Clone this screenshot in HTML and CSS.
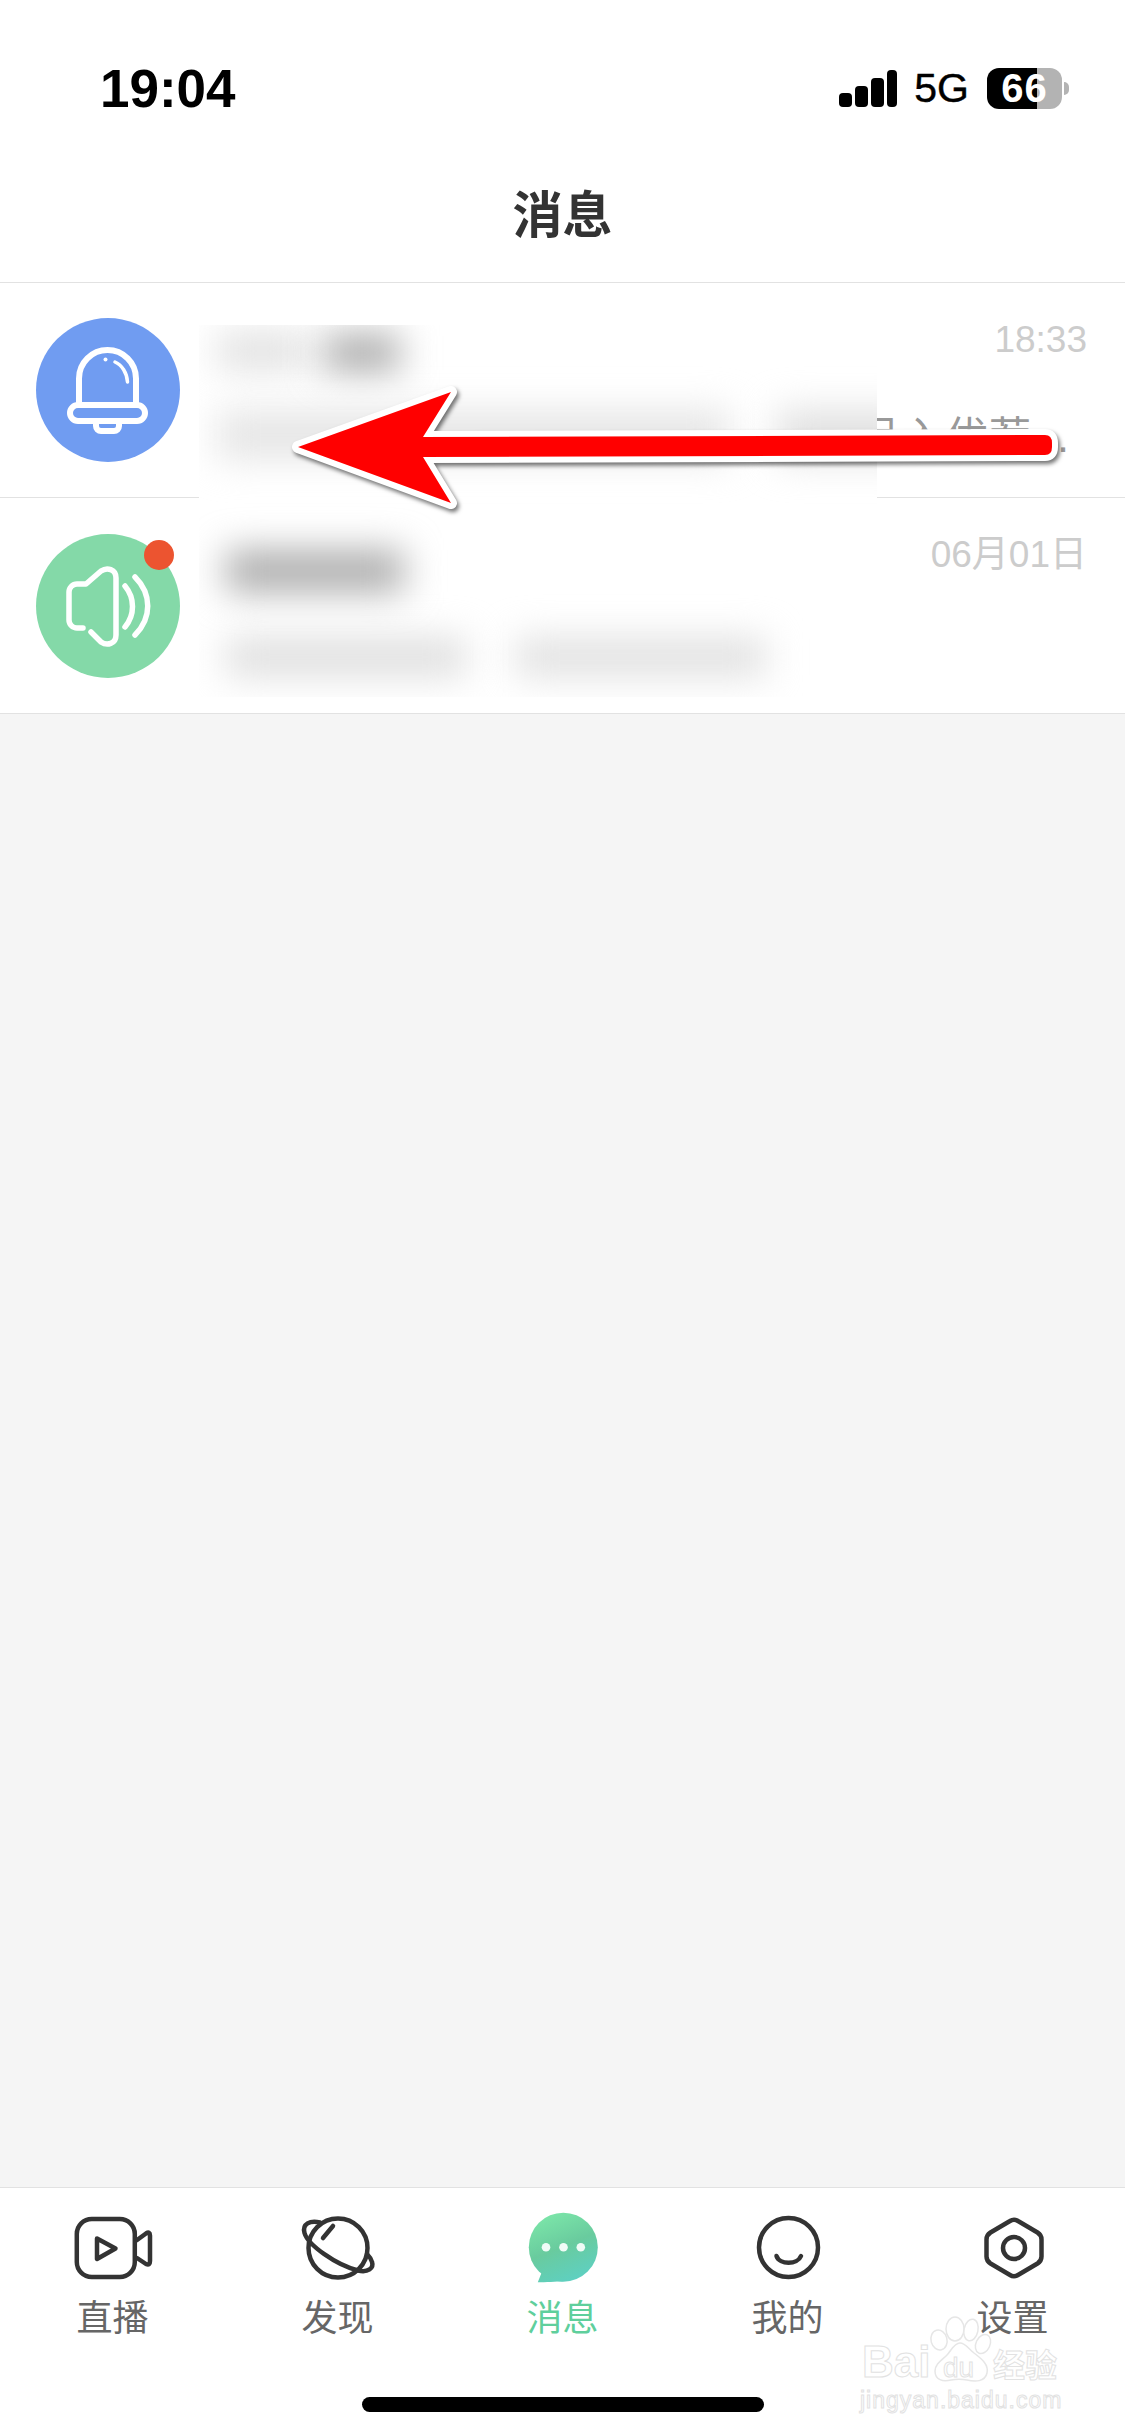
FILE: index.html
```html
<!DOCTYPE html>
<html lang="zh-CN">
<head>
  <meta charset="UTF-8">
  <meta name="viewport" content="width=device-width, initial-scale=1.0">
  <title>消息</title>
  <link rel="stylesheet" href="styles.css">
</head>
<body>
<div class="phone">

  <div class="status-bar">
    <span class="clock">19:04</span>
    <div class="status-right">
      <svg class="signal" width="58" height="37" viewBox="0 0 58 37">
        <rect x="0" y="23" width="13" height="14" rx="4"/>
        <rect x="16" y="16" width="13" height="21" rx="4"/>
        <rect x="32" y="8" width="13" height="29" rx="4"/>
        <rect x="48" y="0" width="10" height="37" rx="4"/>
      </svg>
      <span class="net">5G</span>
      <div class="battery">66</div>
      <div class="battery-cap"></div>
    </div>
  </div>

  <div class="page-title">消息</div>

  <div class="msg-list">
    <div class="msg-row">
      <div class="avatar avatar-blue">
        <svg width="144" height="144" viewBox="0 0 144 144" fill="none" stroke="#fff" stroke-width="6" stroke-linecap="round">
          <path d="M43 85V60.5a28.5 28.5 0 0 1 57 0V85"/>
          <rect x="34" y="87" width="75" height="16" rx="8"/>
          <path d="M60 105v3a5 5 0 0 0 5 5h13a5 5 0 0 0 5-5v-3"/>
          <path d="M79 44c7 3 12 11 12.500 20" stroke-width="3.500"/>
          <circle cx="69.500" cy="41.500" r="2" fill="#fff" stroke="none"/>
        </svg>
      </div>
      <div class="msg-body">
        <div class="msg-time">18:33</div>
        <div class="msg-preview">品入优荐...</div>
      </div>
    </div>

    <div class="msg-row">
      <div class="avatar avatar-green">
        <svg width="144" height="144" viewBox="0 0 144 144" fill="none" stroke="#fff" stroke-width="5.500" stroke-linecap="round" stroke-linejoin="round">
          <path d="M47 94H41a8 8 0 0 1-8-8V58a8 8 0 0 1 8-8h9l15-13c6-4 15-2 15 7v57c0 9-9 11-15 7L55 98"/>
          <path d="M89 52c10 12 10 29 0 41"/>
          <path d="M99 43c17 17 17 41 0 58"/>
        </svg>
        <span class="unread-dot"></span>
      </div>
      <div class="msg-body">
        <div class="msg-time">06月01日</div>
      </div>
    </div>

    <!-- blurred part of the screenshot, sits over names and previews -->
    <div class="redact">
      <div class="blob blob-name1a"></div>
      <div class="blob blob-name1b"></div>
      <div class="blob blob-text1a"></div>
      <div class="blob blob-text1b"></div>
      <div class="blob blob-name2"></div>
      <div class="blob blob-text2a"></div>
      <div class="blob blob-text2b"></div>
    </div>
  </div>

  <div class="spacer"></div>

  <div class="tab-bar">
    <div class="tab">
      <svg class="tab-icon" viewBox="0 0 100 78" fill="none" stroke="#333" stroke-width="4.500" stroke-linecap="round" stroke-linejoin="round">
        <rect x="13.800" y="9" width="58" height="58" rx="15"/>
        <path d="M74 30l9-6.500q4-2.500 4 2V51q0 5-4 3L74 48"/>
        <path d="M34 28.500L52.500 38.500 34 49z"/>
      </svg>
      <span>直播</span>
    </div>
    <div class="tab">
      <svg class="tab-icon" viewBox="0 0 100 78" fill="none" stroke="#333" stroke-width="4.500" stroke-linecap="round" stroke-linejoin="round">
        <circle cx="50" cy="38" r="29.500"/>
        <path d="M32 12.500C22 10 14 14 16.500 23 20 35 48 55 70 60.500 80 63 86 58 84 52 83 48 81 46 79 44"/>
        <path d="M35 28l10-12"/>
      </svg>
      <span>发现</span>
    </div>
    <div class="tab tab-active">
      <svg class="tab-icon" viewBox="0 0 100 78">
        <defs>
          <linearGradient id="bubble" gradientUnits="userSpaceOnUse" x1="32" y1="4" x2="60" y2="72">
            <stop offset="0" stop-color="#7ce6a9"/>
            <stop offset="0.500" stop-color="#69cb9e"/>
            <stop offset="1" stop-color="#5ed0c2"/>
          </linearGradient>
        </defs>
        <circle cx="50.300" cy="37.200" r="34.500" fill="url(#bubble)"/>
        <path d="M32 54L24.800 72.300C32 72.300 44 71.500 50 71.500z" fill="url(#bubble)"/>
        <circle cx="33" cy="37.300" r="4.300" fill="#f0fbf6"/>
        <circle cx="50.500" cy="37.300" r="4.300" fill="#f0fbf6"/>
        <circle cx="67.800" cy="37.300" r="4.300" fill="#f0fbf6"/>
      </svg>
      <span>消息</span>
    </div>
    <div class="tab">
      <svg class="tab-icon" viewBox="0 0 100 78" fill="none" stroke="#333" stroke-width="4.500" stroke-linecap="round">
        <circle cx="50.500" cy="37.500" r="29.500"/>
        <path d="M38.500 46c3 9 21 9 24.500 0"/>
      </svg>
      <span>我的</span>
    </div>
    <div class="tab">
      <svg class="tab-icon" viewBox="0 0 100 78" fill="none" stroke="#333" stroke-width="4.500" stroke-linejoin="round">
        <path d="M47 11q4-2.500 8 0l19.500 11.500q4 2.500 4 7v17q0 4.500-4 7L55 65q-4 2.500-8 0L27.500 53.500q-4-2.500-4-7v-17q0-4.500 4-7z"/>
        <circle cx="51" cy="38" r="11"/>
      </svg>
      <span>设置</span>
    </div>
  </div>

  <div class="home-bar"></div>

  <div class="watermark">
    <svg class="wm-paw" width="140" height="70" viewBox="0 0 140 70" fill="#fff" stroke="#e6e6e6" stroke-width="1.500">
      <ellipse cx="95" cy="14" rx="9" ry="12"/>
      <ellipse cx="79" cy="25" rx="8" ry="10" transform="rotate(-15 79 25)"/>
      <ellipse cx="111" cy="15" rx="7" ry="11" transform="rotate(12 111 15)"/>
      <ellipse cx="123" cy="29" rx="7" ry="10" transform="rotate(25 123 29)"/>
      <path d="M100 28c5 0 8 5 14 10 8 6 15 12 13 20-2 9-12 9-20 7-6-1-10-1-16 0-8 2-16 0-16-9 0-7 7-11 12-16 4-4 7-12 13-12z"/>
    </svg>
    <div class="wm-top">
      <span class="wm-bai">Bai</span>
      <span class="wm-du">du</span>
      <span class="wm-cn">经验</span>
    </div>
    <div class="wm-url">jingyan.baidu.com</div>
  </div>

  <svg class="arrow" width="790" height="145" viewBox="280 375 790 145">
    <path d="M298 447L451 392 423 437 1045 435Q1052 435 1052 443V447Q1052 455 1045 455L423 457 451 503z" fill="#f00" stroke="#fff" stroke-width="12" stroke-linejoin="round" paint-order="stroke"/>
  </svg>

</div>
</body>
</html>
```
FILE: styles.css
```css
* {
  box-sizing: border-box;
}

body {
  margin: 0;
  font-family: "Liberation Sans", "Noto Sans CJK SC", sans-serif;
  background-color: #f5f5f5;
}

.phone {
  position: relative;
  display: flex;
  flex-direction: column;
  width: 1125px;
  height: 2436px;
  overflow: hidden;
}

/* status bar */
.status-bar {
  display: flex;
  justify-content: space-between;
  align-items: center;
  height: 150px;
  padding: 26px 56px 0 100px;
  background-color: white;
  color: black;
}

.clock {
  font-size: 53px;
  font-weight: bold;
}

.status-right {
  display: flex;
  align-items: center;
}

.signal {
  margin-right: 17px;
}

.net {
  font-size: 41px;
  margin-right: 18px;
  -webkit-text-stroke: 0.4px black;
}

.battery {
  width: 75px;
  height: 41px;
  border-radius: 12px;
  background: linear-gradient(to right, black 50px, #b3b3b3 50px);
  color: white;
  font-size: 40px;
  font-weight: bold;
  line-height: 41px;
  letter-spacing: 1px;
  text-align: center;
}

.battery-cap {
  width: 5px;
  height: 13px;
  margin-left: 2px;
  border-radius: 0 5px 5px 0;
  background-color: #b3b3b3;
}

.page-title {
  height: 133px;
  line-height: 133px;
  background-color: white;
  border-bottom: 1px solid #e2e2e2;
  color: #333;
  font-size: 50px;
  font-weight: bold;
  text-align: center;
}

/* message rows */
.msg-list {
  position: relative;
}

.msg-row {
  display: flex;
  align-items: center;
  height: 215px;
  padding: 0 38px 0 36px;
  background-color: white;
  border-bottom: 1px solid #e2e2e2;
}

.msg-row:nth-child(2) {
  height: 216px;
}

.avatar {
  position: relative;
  flex-shrink: 0;
  width: 144px;
  height: 144px;
  border-radius: 50%;
}

.avatar svg {
  display: block;
}

.avatar-blue {
  background-color: #709cf1;
}

.avatar-green {
  background-color: #84d9a8;
}

.unread-dot {
  position: absolute;
  top: 6px;
  right: 6px;
  width: 30px;
  height: 30px;
  border-radius: 50%;
  background-color: #ec5430;
}

.msg-body {
  flex: 1;
  align-self: stretch;
  min-width: 0;
  padding-top: 32px;
}

.msg-time {
  height: 50px;
  line-height: 50px;
  color: #ccc;
  font-size: 37px;
  text-align: right;
}

.msg-preview {
  margin-top: 44px;
  padding-right: 17px;
  height: 58px;
  line-height: 58px;
  color: #999;
  font-size: 42px;
  letter-spacing: 1px;
  text-align: right;
  white-space: nowrap;
}

.redact {
  position: absolute;
  top: 42px;
  left: 199px;
  width: 678px;
  height: 372px;
  background-color: white;
  overflow: hidden;
}

.blob {
  position: absolute;
  filter: blur(18px);
}

.blob-name1a {
  top: 8px;
  left: 18px;
  width: 90px;
  height: 36px;
  background-color: #e0e0e0;
}

.blob-name1b {
  top: 10px;
  left: 125px;
  width: 76px;
  height: 36px;
  background-color: #a8a8a8;
}

.blob-text1a {
  top: 85px;
  left: 18px;
  width: 513px;
  height: 50px;
  background-color: #e6e6e6;
}

.blob-text1b {
  top: 85px;
  left: 578px;
  width: 140px;
  height: 50px;
  background-color: #e0e0e0;
}

.blob-name2 {
  top: 225px;
  left: 27px;
  width: 178px;
  height: 42px;
  background-color: #acacac;
}

.blob-text2a {
  top: 313px;
  left: 27px;
  width: 240px;
  height: 38px;
  background-color: #dedede;
}

.blob-text2b {
  top: 313px;
  left: 317px;
  width: 250px;
  height: 38px;
  background-color: #e0e0e0;
}

.spacer {
  flex: 1;
}

/* bottom tabs */
.tab-bar {
  display: grid;
  grid-template-columns: repeat(5, 225px);
  height: 249px;
  padding-top: 22px;
  background-color: white;
  border-top: 1px solid #e2e2e2;
}

.tab {
  display: flex;
  flex-direction: column;
  align-items: center;
  color: #666;
  font-size: 36px;
  line-height: 50px;
}

.tab-active {
  color: #5fcf9c;
}

.tab-icon {
  display: block;
  width: 100px;
  height: 78px;
  margin-bottom: 6px;
}

.home-bar {
  position: absolute;
  left: 362px;
  bottom: 24px;
  width: 402px;
  height: 15px;
  border-radius: 8px;
  background-color: black;
}

/* baidu stamp in the corner */
.watermark {
  position: absolute;
  top: 2315px;
  left: 860px;
  width: 210px;
  height: 95px;
  color: white;
  -webkit-text-stroke: 1px #e2e2e2;
}

.wm-paw {
  position: absolute;
  top: 0;
  left: 0;
}

.wm-top {
  position: relative;
  display: flex;
  align-items: baseline;
  padding-top: 24px;
  height: 70px;
  line-height: 46px;
}

.wm-bai {
  width: 83px;
  padding-left: 2px;
  font-size: 44px;
  font-weight: bold;
}

.wm-du {
  width: 50px;
  font-size: 28px;
}

.wm-cn {
  font-size: 32px;
  font-weight: bold;
}

.wm-url {
  margin-top: 3px;
  font-size: 23px;
  line-height: 24px;
  letter-spacing: 1px;
  white-space: nowrap;
}

.arrow {
  position: absolute;
  top: 375px;
  left: 280px;
  filter: drop-shadow(2px 3px 2px rgba(0,0,0,0.55));
}
```
